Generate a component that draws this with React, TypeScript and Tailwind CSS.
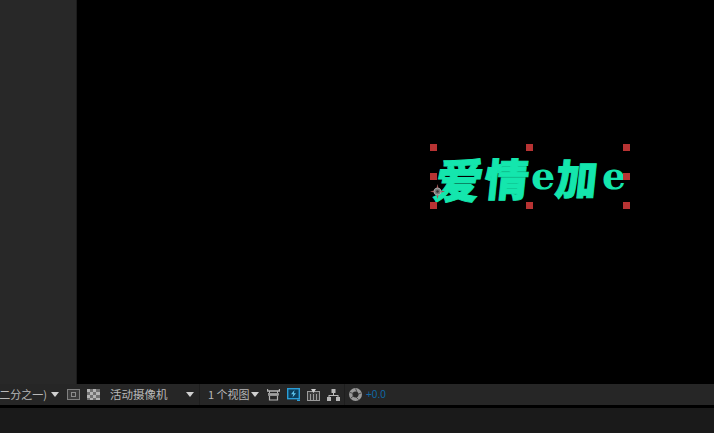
import React from "react";

const handles = [
  "left-[430px] top-[144px]", "left-[526px] top-[144px]", "left-[623px] top-[144px]",
  "left-[430px] top-[173px]", "left-[623px] top-[173px]",
  "left-[430px] top-[202px]", "left-[526px] top-[202px]", "left-[623px] top-[202px]",
];

function Caret({ className = "" }: { className?: string }) {
  return <span className={`w-0 h-0 border-x-[4px] border-x-transparent border-t-[5px] border-t-[#d0d0d0] ${className}`} />;
}

function Sep() {
  return <span className="block w-px h-[21px] bg-[#1e1e1e] shrink-0" />;
}

export default function App() {
  return (
    <div className="relative w-[714px] h-[433px] overflow-hidden bg-black flex flex-col font-['Noto_Sans_CJK_SC','Liberation_Sans',sans-serif]">
      <div className="flex h-[384px] shrink-0">
        <div className="w-[76px] bg-[#282828] border-r border-[#1c1c1c] box-content" />
        <div className="flex-1 bg-black" />
      </div>

      <div className="h-[21px] shrink-0 bg-[#262626] flex items-center text-[11px] leading-none text-[#b8b8b8] overflow-hidden">
        <div className="w-[47px] shrink-0 flex justify-end whitespace-nowrap">二分之一)</div>
        <Caret className="ml-[4px]" />
        <span className="ml-[8px] w-[13px] h-[11px] border border-[#808080] bg-[#3c3c3c] flex items-center justify-center">
          <span className="w-[5px] h-[5px] border border-[#8c8c8c]" />
        </span>
        <svg className="ml-[7px]" width="13" height="11" viewBox="0 0 13 11">
          <rect width="13" height="11" fill="#707070" />
          <path d="M0 0h3v3H0zM6 0h3v3H6zM3 3h3v3H3zM9 3h4v3H9zM0 6h3v3H0zM6 6h3v3H6zM3 9h3v2H3zM9 9h4v2H9z" fill="#b4b4b4" />
        </svg>
        <span className="ml-[10px] w-[60px] shrink-0 text-[11.5px] whitespace-nowrap">活动摄像机</span>
        <Caret className="ml-[16px]" />
        <span className="ml-[5px]"><Sep /></span>
        <span className="ml-[8px] w-[41px] shrink-0 whitespace-nowrap">1 个视图</span>
        <Caret className="ml-[2px]" />
        <svg className="ml-[8px]" width="13" height="13" viewBox="0 0 13 13" fill="none" stroke="#b4b4b4">
          <path d="M0.500 1v2h12V1" strokeWidth="1.300" />
          <path d="M2.500 3v2M10.500 3v2" strokeWidth="1" />
          <rect x="1.500" y="5.500" width="10" height="2" fill="#a0a0a0" strokeWidth="0.600" />
          <path d="M2.500 8v4h8V8" strokeWidth="1.200" />
        </svg>
        <svg className="ml-[7px]" width="13" height="13" viewBox="0 0 13 13">
          <rect x="0.700" y="0.700" width="11.600" height="10" fill="#0c3f5c" stroke="#2a9ed8" strokeWidth="1.400" />
          <path d="M7.500 2 4 6.300H6.300L5.500 9.500 9 5.200H6.800z" fill="#5fc6ee" />
          <rect x="10" y="11.500" width="3" height="1.500" fill="#2a9ed8" />
        </svg>
        <svg className="ml-[7px]" width="13" height="12" viewBox="0 0 13 12" fill="none" stroke="#9c9c9c">
          <rect x="0.500" y="2.500" width="12" height="9" strokeWidth="1" fill="#3c3c3c" />
          <path d="M3.500 5v6M9.500 5v6M6.500 5v6" strokeWidth="1" />
          <path d="M4 0h5L6.500 4z" fill="#d0d0d0" stroke="none" />
        </svg>
        <svg className="ml-[7px]" width="13" height="12" viewBox="0 0 13 12" fill="#b8b8b8">
          <rect x="4.500" y="0" width="4" height="4" />
          <rect x="0" y="8" width="4" height="4" />
          <rect x="9" y="8" width="4" height="4" />
          <path d="M6 4h1v2h4.500v2h-1V7h-8v1h-1V6H6z" />
        </svg>
        <span className="ml-[4px]"><Sep /></span>
        <svg className="ml-[4px]" width="13" height="13" viewBox="0 0 13 13">
          <circle cx="6.500" cy="6.500" r="6.500" fill="#9a9a9a" />
          <circle cx="6.500" cy="6.500" r="3" fill="#2a2a2a" />
          <path d="M6.500 0.500 8 4M12 5 8.500 6.500M9.500 11.500 7 9M2 10l3-2.500M1 4.500l3.500 1" stroke="#3a3a3a" strokeWidth="0.800" />
        </svg>
        <span className="ml-[4px] text-[10px] text-[#0e6ba8] whitespace-nowrap font-['Liberation_Sans',sans-serif]">+0.0</span>
      </div>

      <div className="h-[3px] shrink-0 bg-black" />
      <div className="flex-1 bg-[#1a1a1a]" />

      <div className="absolute left-[436px] top-[150px] h-[54px] flex items-center text-[#14e6ad] leading-none whitespace-nowrap">
        <span className="text-[47px] font-black w-[49px] -skew-x-12 [-webkit-text-stroke:1px_#14e6ad]">爱</span>
        <span className="text-[44px] font-black w-[46px] -skew-x-6 [-webkit-text-stroke:1px_#14e6ad]">情</span>
        <span className="text-[38px] font-bold w-[25px] font-['DejaVu_Serif',serif] mt-[-2px] ">e</span>
        <span className="text-[42px] font-black w-[46px] -skew-x-6 [-webkit-text-stroke:1px_#14e6ad]">加</span>
        <span className="text-[38px] font-bold w-[25px] font-['DejaVu_Serif',serif] mt-[-2px]">e</span>
      </div>

      {handles.map((h) => (
        <span key={h} className={`absolute ${h} w-[7px] h-[7px] bg-[#b73333]`} />
      ))}

      <svg className="absolute left-[430px] top-[184px]" width="15" height="15" viewBox="0 0 15 15">
        <path d="M7.500 0 9 6 15 7.500 9 9 7.500 15 6 9 0 7.500 6 6z" fill="#a05050" />
        <circle cx="7.500" cy="7.500" r="3.500" fill="#777" stroke="#b8b8b8" strokeWidth="0.800" />
        <circle cx="7.500" cy="7.500" r="1.200" fill="#333" />
      </svg>
    </div>
  );
}
